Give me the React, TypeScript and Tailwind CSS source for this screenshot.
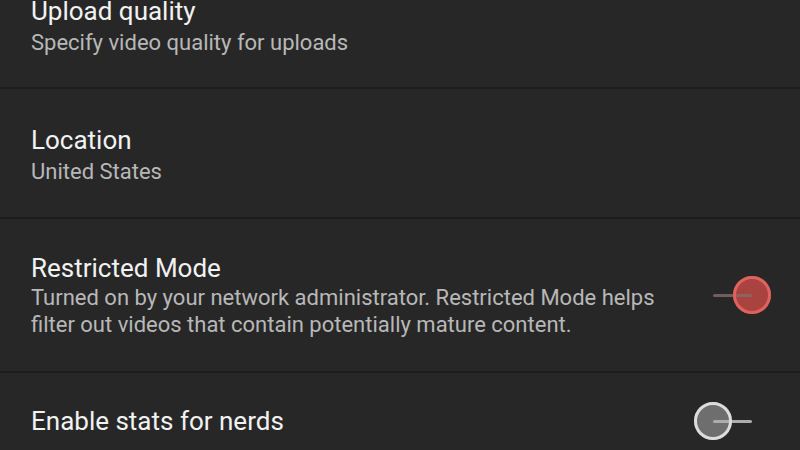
import React from 'react';

type RowProps = {
    title: string;
    children?: React.ReactNode;
    toggle?: 'on' | 'off';
    className?: string;
};

const Toggle = ({ on }: { on: boolean }) => {
    const left = on ? 'left-[39px]' : 'left-0';
    return (
        <div className="relative w-[78px] h-[40px] shrink-0">
            {/* thumb fill, then track, then ring so the track shows through the thumb */}
            <span
                className={`absolute top-[1px] size-[38px] rounded-full ${left} ${
                    on ? 'bg-[#a8433f]' : 'bg-[#6e6e6e]'
                }`}
            ></span>
            <span
                className={`absolute top-[19px] left-[19px] w-[39px] h-[3px] rounded-full ${
                    on ? 'bg-[#8a6a6a]/80' : 'bg-[#acacac]'
                }`}
            ></span>
            <span
                className={`absolute top-[1px] size-[38px] rounded-full border-[3px] ${left} ${
                    on ? 'border-[#e0625d]' : 'border-[#dcdcdc]'
                }`}
            ></span>
        </div>
    );
};

const Row = ({ title, children, toggle, className }: RowProps) => {
    return (
        <li
            className={`flex items-center justify-between pl-[31px] pr-[28px] border-b-2 border-[#1d1d1d] ${className ?? ''}`}
        >
            <div className="flex flex-col">
                <h2 className="text-[26px] leading-[32px] text-[#f2f2f2]">{title}</h2>
                {children}
            </div>
            {toggle && <Toggle on={toggle === 'on'} />}
        </li>
    );
};

const App = () => {
    return (
        <div
            className="w-[800px] h-[450px] overflow-hidden bg-[#272727]"
            style={{ fontFamily: 'Roboto, "Noto Sans", sans-serif' }}
        >
            <ul className="flex flex-col -mt-[41px]">
                <Row title="Upload quality" className="h-[130px] pt-[6px]">
                    <p className="mt-[1px] text-[22px] leading-[30px] text-[#b8b8b8]">
                        Specify video quality for uploads
                    </p>
                </Row>
                <Row title="Location" className="h-[130px] pt-[4px]">
                    <p className="mt-[1px] text-[22px] leading-[30px] text-[#b8b8b8]">
                        United States
                    </p>
                </Row>
                <Row title="Restricted Mode" toggle="on" className="h-[154px]">
                    <p className="text-[22px] leading-[27px] text-[#b8b8b8]">
                        Turned on by your network administrator. Restricted Mode helps
                        <br />
                        filter out videos that contain potentially mature content.
                    </p>
                </Row>
                <Row title="Enable stats for nerds" toggle="off" className="h-[96px] pt-[2px]" />
            </ul>
        </div>
    );
};

export default App;
